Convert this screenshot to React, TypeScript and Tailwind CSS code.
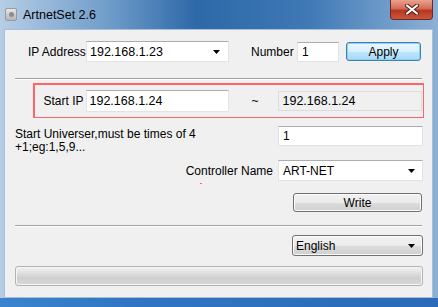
import React from "react";

const Tri = () => (
  <svg width="7" height="4" viewBox="0 0 7 4" className="shrink-0">
    <path d="M0 0H7L3.5 4Z" fill="#000" />
  </svg>
);

export default function App() {
  return (
    <div
      className="w-[438px] h-[307px] overflow-hidden flex flex-col bg-[linear-gradient(90deg,#b6cde6_0%,#6f9cc9_25%,#2d68a8_45%,#3e78b5_70%,#8db1d6_100%)]"
      style={{ fontFamily: '"Liberation Sans", Arial, sans-serif' }}
    >
      {/* title bar */}
      <div className="h-[29px] flex items-start relative">
        <div className="ml-[5px] mt-[8px] w-[12px] h-[13px] rounded-[2px] bg-[linear-gradient(180deg,#e6e6e6,#b5b5b5)] border border-[#9a9a9a] flex items-center justify-center">
          <div className="w-[5px] h-[5px] rounded-full bg-[#8c8c8c]" />
        </div>
        <div className="ml-[6px] mt-[7px] text-[12.5px] text-black leading-[16px]">ArtnetSet 2.6</div>
        <div className="ml-auto mr-[5px] w-[43px] h-[20px] rounded-b-[4px] border border-t-0 border-[#6b2a22] bg-[linear-gradient(180deg,#e9a38f_0%,#d26b55_45%,#b8351f_55%,#c9553b_100%)] flex items-center justify-center">
          <svg width="14" height="11" viewBox="0 0 14 11">
            <path d="M2 1.5L12 9.5M12 1.5L2 9.5" stroke="#4a1d16" strokeWidth="4" strokeLinecap="round" />
            <path d="M2 1.5L12 9.5M12 1.5L2 9.5" stroke="#ffffff" strokeWidth="2.2" strokeLinecap="round" />
          </svg>
        </div>
      </div>

      {/* body */}
      <div className="ml-[4px] w-[429px] h-[269px] bg-[#f0f0f0] border border-[#a9bfd6] flex flex-col text-[12px] text-black leading-[14px]">
        {/* row 1 */}
        <div className="mt-[11px] ml-[23px] h-[21px] flex items-center">
          <div className="w-[58px]">IP Address</div>
          <div className="w-[143px] h-[21px] bg-white border border-[#e3e3e3] border-t-[#abadb3] flex items-center pl-[3px] pr-[8px]">
            <span className="flex-1 text-[12.5px]">192.168.1.23</span>
            <Tri />
          </div>
          <div className="ml-[22px] w-[46px]">Number</div>
          <div className="w-[42px] h-[20px] bg-white border border-[#e3e3e3] border-t-[#abadb3] flex items-center pl-[4px]">1</div>
          <div className="ml-[7px] w-[75px] h-[19px] rounded-[3px] border border-[#3c7fb1] bg-[linear-gradient(180deg,#eaf6fd_0%,#d9f0fc_50%,#bee6fd_51%,#a7d9f5_100%)] shadow-[inset_0_0_0_1px_#8fd0f3] flex items-center justify-center">
            Apply
          </div>
        </div>

        {/* separator */}
        <div className="mt-[16px] ml-[10px] w-[407px] h-[2px] border-t border-[#a0a0a0] border-b border-b-white" />

        {/* red box */}
        <div className="mt-[3px] ml-[28px] w-[391px] h-[35px] bg-red-400 p-[1.5px]">
          <div className="w-full h-full bg-[#f0f0f0] flex items-center pl-[9px]">
            <div className="w-[42px]">Start IP</div>
            <div className="w-[143px] h-[22px] bg-white border border-[#e3e3e3] border-t-[#abadb3] flex items-center pl-[3px] text-[12.5px]">
              192.168.1.24
            </div>
            <div className="ml-[23px] w-[26px]">~</div>
            <div className="w-[144px] h-[20px] bg-[#f0f0f0] border border-[#dcdcdc] flex items-center pl-[4px] text-[12.5px]">
              192.168.1.24
            </div>
          </div>
        </div>

        {/* universe row */}
        <div className="mt-[8px] ml-[10px] flex items-start">
          <div className="w-[263px] pt-[2px] leading-[13px]">
            Start Universer,must be times of 4
            <br />
            +1;eg:1,5,9...
          </div>
          <div className="w-[145px] h-[20px] bg-white border border-[#e3e3e3] border-t-[#abadb3] flex items-center pl-[4px]">1</div>
        </div>

        {/* controller name */}
        <div className="mt-[6px] h-[21px] flex items-center justify-end pr-[9px]">
          <div className="mr-[5px]">Controller Name</div>
          <div className="w-[145px] h-[21px] bg-white border border-[#e3e3e3] border-t-[#abadb3] flex items-center pl-[4px] pr-[7px]">
            <span className="flex-1">ART-NET</span>
            <Tri />
          </div>
        </div>

        <div className="mt-[2px] ml-[195px] w-[2px] h-[1px] bg-red-400" />

        {/* write */}
        <div className="mt-[9px] ml-[288px] w-[129px] h-[19px] rounded-[3px] border border-[#707070] bg-[linear-gradient(180deg,#f2f2f2_0%,#ebebeb_50%,#dddddd_51%,#cfcfcf_100%)] shadow-[inset_0_0_0_1px_#fcfcfc] flex items-center justify-center">
          Write
        </div>

        <div className="mt-[13px] ml-[10px] w-[407px] h-[2px] border-t border-[#a0a0a0] border-b border-b-white" />

        {/* language */}
        <div className="mt-[8px] ml-[287px] w-[131px] h-[21px] rounded-[3px] border border-[#707070] bg-[linear-gradient(180deg,#f2f2f2_0%,#ebebeb_50%,#dddddd_51%,#cfcfcf_100%)] shadow-[inset_0_0_0_1px_#fcfcfc] flex items-center pl-[3px] pr-[7px]">
          <span className="flex-1">English</span>
          <Tri />
        </div>

        {/* progress */}
        <div className="mt-[10px] ml-[10px] w-[408px] h-[20px] rounded-[3px] border border-[#b2b2b2] bg-[linear-gradient(180deg,#f3f3f3_0%,#e1e1e1_30%,#cfcfcf_60%,#d8d8d8_100%)] shadow-[inset_0_0_0_1px_#f6f6f6]" />
      </div>
      <div className="flex-1 bg-[linear-gradient(90deg,#3a84cf,#2f75c3_30%,#2a6ab8_100%)]" />
    </div>
  );
}
